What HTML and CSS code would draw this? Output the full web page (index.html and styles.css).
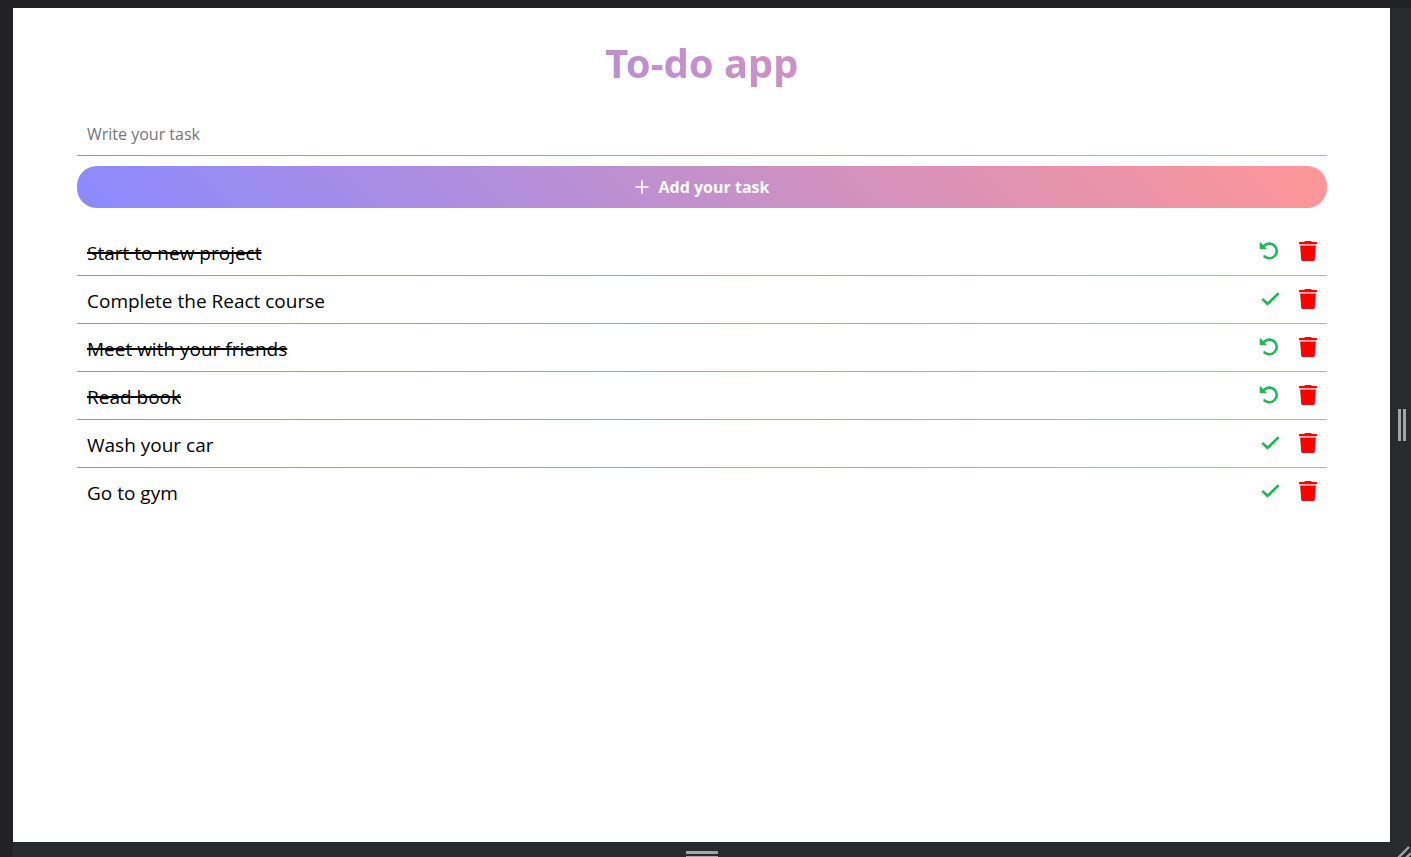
FILE: index.html
```
<!DOCTYPE html>
<html lang="en">
<head>
<meta charset="utf-8">
<meta name="viewport" content="width=device-width, initial-scale=1">
<title>To-do app</title>
<link rel="stylesheet" href="styles.css">
</head>
<body>
<svg class="sprite" aria-hidden="true">
  <symbol id="undo" viewBox="0 0 20 22"><path d="M5 6A7.3 7.3 0 1 1 5.6 16.4" fill="none" stroke="currentColor" stroke-width="2.6" stroke-linecap="round"/><path d="M.7 2.8Q.8 1.8 1.6 2.5L7.4 8.3Q7.8 9.2 6.9 9.2H1.6Q.7 9.2 .7 8.3Z" fill="currentColor"/></symbol>
  <symbol id="check" viewBox="0 0 20 22"><path d="M4.1 11.6l4.4 4.4L18.9 6" fill="none" stroke="currentColor" stroke-width="2.6" stroke-linecap="round" stroke-linejoin="round"/></symbol>
  <symbol id="trash" viewBox="0 0 20 22"><path d="M1.6 2H6.2L7 .9h6l.8 1.1h4.6q.6 0 .6.6v1.6H1V2.6Q1 2 1.6 2ZM2.1 5.4h15.8l-1.1 14.1q-.1 1.5-1.6 1.5H4.8q-1.5 0-1.6-1.5Z" fill="currentColor"/></symbol>
</svg>
<div class="device">
  <main class="screen">
    <h1 class="title">To-do app</h1>
    <form class="task-form">
      <input class="task-input" type="text" placeholder="Write your task" aria-label="Write your task">
      <button class="add-button" type="button">
        <svg class="plus" viewBox="0 0 14 14" aria-hidden="true"><path d="M7 1v12M1 7h12" stroke="currentColor" stroke-width="1.7" stroke-linecap="round"/></svg>
        <span>Add your task</span>
      </button>
    </form>
    <ul class="tasks">
      <li class="task"><span class="name done">Start to new project</span><button class="icon toggle" type="button" aria-label="Undo"><svg><use href="#undo"/></svg></button><button class="icon delete" type="button" aria-label="Delete"><svg><use href="#trash"/></svg></button></li>
      <li class="task"><span class="name">Complete the React course</span><button class="icon toggle" type="button" aria-label="Complete"><svg><use href="#check"/></svg></button><button class="icon delete" type="button" aria-label="Delete"><svg><use href="#trash"/></svg></button></li>
      <li class="task"><span class="name done">Meet with your friends</span><button class="icon toggle" type="button" aria-label="Undo"><svg><use href="#undo"/></svg></button><button class="icon delete" type="button" aria-label="Delete"><svg><use href="#trash"/></svg></button></li>
      <li class="task"><span class="name done">Read book</span><button class="icon toggle" type="button" aria-label="Undo"><svg><use href="#undo"/></svg></button><button class="icon delete" type="button" aria-label="Delete"><svg><use href="#trash"/></svg></button></li>
      <li class="task"><span class="name">Wash your car</span><button class="icon toggle" type="button" aria-label="Complete"><svg><use href="#check"/></svg></button><button class="icon delete" type="button" aria-label="Delete"><svg><use href="#trash"/></svg></button></li>
      <li class="task"><span class="name">Go to gym</span><button class="icon toggle" type="button" aria-label="Complete"><svg><use href="#check"/></svg></button><button class="icon delete" type="button" aria-label="Delete"><svg><use href="#trash"/></svg></button></li>
    </ul>
  </main>
  <div class="grip grip-side"></div>
  <div class="grip grip-bottom"></div>
  <svg class="corner" viewBox="0 0 14 12" aria-hidden="true"><path d="M1 13L12 2M8 14l6-6" stroke="#a5a5a5" stroke-width="2.4"/></svg>
</div>
</body>
</html>
```
FILE: styles.css
```
:root {
  --gradient: linear-gradient(45deg, #8a8aff, #ff9696);
}

* {
  box-sizing: border-box;
}

body {
  margin: 0;
  background: #292a2d;
  color: #000;
  font-family: "Segoe UI", "Open Sans", sans-serif;
}

.sprite {
  position: absolute;
  width: 0;
  height: 0;
}

.device {
  display: grid;
  grid-template-columns: minmax(0, 1fr) 21px;
  grid-template-rows: 1fr 15px;
  min-height: 100vh;
  border-top: 8px solid #222224;
  border-left: 13px solid #222224;
  overflow: hidden;
}

.screen {
  padding: 28px 63px 28px 64px;
  background: #fff;
}

.title {
  margin: 0 0 22px;
  font-family: "Segoe UI", "Noto Sans", sans-serif;
  font-size: 40px;
  line-height: 54px;
  text-align: center;
  background: var(--gradient);
  background-clip: text;
  -webkit-background-clip: text;
  color: transparent;
}

.task-form {
  display: flex;
  flex-direction: column;
  gap: 10px;
  margin-bottom: 20px;
}

.task-input {
  height: 44px;
  padding: 0 10px;
  border: 0;
  border-bottom: 1px solid;
  border-image: var(--gradient) 1;
  outline: 0;
  background: none;
  font: 16px "Segoe UI", "Open Sans", sans-serif;
}

.task-input::placeholder {
  color: #757575;
}

.add-button {
  display: flex;
  align-items: center;
  justify-content: center;
  gap: 10px;
  height: 42px;
  border: 0;
  border-radius: 20px;
  background: var(--gradient);
  color: #fff;
  font: bold 16px "Segoe UI", "Open Sans", sans-serif;
}

.plus {
  width: 14px;
  height: 14px;
}

.tasks {
  margin: 0;
  padding: 0;
  list-style: none;
}

.task {
  display: flex;
  align-items: center;
  gap: 19px;
  height: 48px;
  padding: 0 9px 2px 10px;
  border-bottom: 1px solid transparent;
  border-image: var(--gradient) 1;
}

.task:last-child {
  border-image: none;
}

.name {
  flex: 1;
  padding-top: 4px;
  font-size: 19px;
}

.done {
  text-decoration: line-through 2px;
}

.icon {
  display: flex;
  width: 20px;
  height: 22px;
  padding: 0;
  border: 0;
  background: none;
}

.icon svg {
  width: 100%;
  height: 100%;
}

.toggle {
  color: #1db954;
}

.delete {
  color: #f00;
}

.grip {
  border: solid #a5a5a5;
}

.grip-side {
  align-self: center;
  justify-self: end;
  width: 8px;
  height: 32px;
  margin-right: 5px;
  border-width: 0 3px;
}

.grip-bottom {
  justify-self: center;
  width: 32px;
  height: 8px;
  margin-top: 9px;
  border-width: 3px 0;
}

.corner {
  place-self: end;
  width: 14px;
  height: 12px;
}
```
